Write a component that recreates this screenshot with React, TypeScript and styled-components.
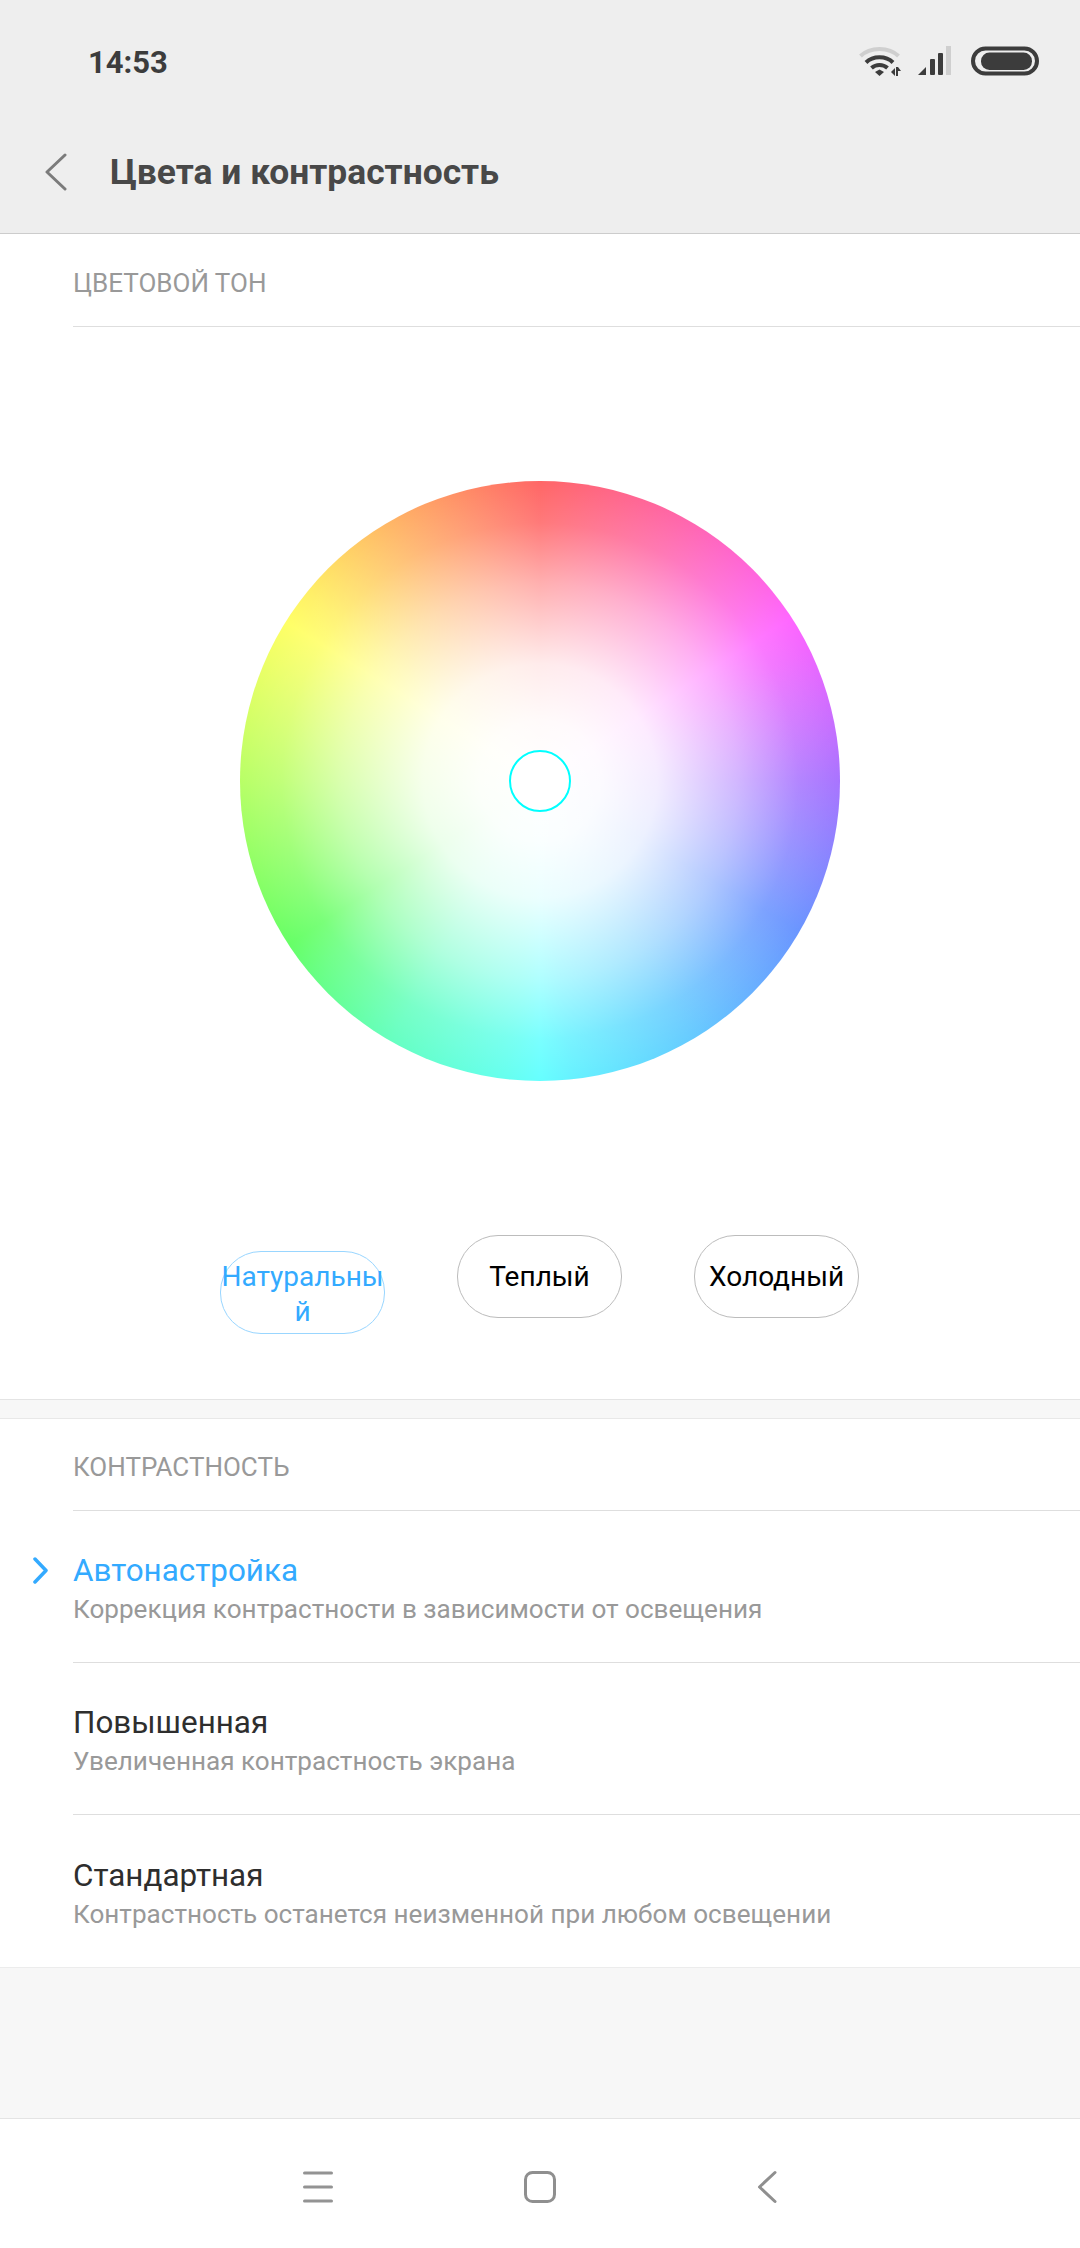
import React from "react"
import styled, { createGlobalStyle } from "styled-components"

const GlobalStyle = createGlobalStyle`
  html, body {
    margin: 0;
    padding: 0;
    background: #fff;
    font-family: Roboto, "Noto Sans", sans-serif;
  }
  * {
    box-sizing: border-box;
  }
`

const Page = styled.div`
  width: 1080px;
  height: 2248px;
  display: flex;
  flex-direction: column;
  background: #f7f7f7;
  overflow: hidden;
`

const Header = styled.header`
  background: #eeeeee;
  border-bottom: 1px solid #cccccc;
  height: 234px;
`

const StatusBar = styled.div`
  height: 124px;
  display: flex;
  align-items: center;
  justify-content: space-between;
  padding: 0 41px 0 88px;
`

const Time = styled.span`
  font-size: 31px;
  font-weight: 700;
  color: #3c3c3c;
`

const StatusIcons = styled.div`
  display: flex;
  align-items: center;
  gap: 17px;
  margin-top: -3px;
`

const ToolBar = styled.div`
  height: 109px;
  display: flex;
  align-items: center;
  padding: 0 0 14px 45px;
`

const Title = styled.h1`
  margin: 0 0 0 43px;
  font-size: 35.4px;
  font-weight: 700;
  color: #484848;
`

const Section = styled.section`
  background: #fff;
`

const SectionTitle = styled.div<{ $tight?: boolean }>`
  margin-left: 73px;
  height: ${(p) => (p.$tight ? "92px" : "93px")};
  display: flex;
  align-items: center;
  padding-top: 5px;
  border-bottom: 1px solid #dedede;
  font-size: 26px;
  color: #999999;
`

const WheelArea = styled.div`
  display: flex;
  flex-direction: column;
  align-items: center;
  padding: 154px 0 65px;
  border-bottom: 1px solid #e4e4e4;
`

const Wheel = styled.div`
  width: 600px;
  height: 600px;
  border-radius: 50%;
  display: flex;
  align-items: center;
  justify-content: center;
  background:
    radial-gradient(
      circle closest-side,
      #fff 0%,
      rgba(255, 255, 255, 0.97) 20%,
      rgba(255, 255, 255, 0.87) 39%,
      rgba(255, 255, 255, 0.48) 66%,
      rgba(255, 255, 255, 0.13) 86%,
      rgba(255, 255, 255, 0) 100%
    ),
    conic-gradient(
      #ff6666 0deg,
      #ff66aa 28deg,
      #ff66e8 50deg,
      #ff66ff 57deg,
      #f066ff 64deg,
      #a874ff 90deg,
      #6a95ff 120deg,
      #66ccff 150deg,
      #66f2ff 174deg,
      #66ffff 180deg,
      #66fff0 186deg,
      #66ffc0 210deg,
      #66ff80 230deg,
      #66ff66 237deg,
      #78ff66 244deg,
      #b8ff66 270deg,
      #f0ff66 295deg,
      #ffff66 302deg,
      #fff066 309deg,
      #ffb066 332deg,
      #ff7a66 352deg,
      #ff6666 360deg
    );
`

const WheelThumb = styled.div`
  width: 62px;
  height: 62px;
  border-radius: 50%;
  border: 2px solid #00ffff;
  background: #ffffff;
`

const Presets = styled.div`
  margin-top: 154px;
  padding-right: 1px;
  display: flex;
  align-items: baseline;
  justify-content: center;
  gap: 72px;
`

const Preset = styled.div<{ $active?: boolean }>`
  width: 165px;
  height: 83px;
  padding-top: ${(p) => (p.$active ? "3px" : "0")};
  border-radius: 41px;
  border: 1px solid ${(p) => (p.$active ? "#99d6ff" : "#bcbcbc")};
  color: ${(p) => (p.$active ? "#33aaff" : "#000000")};
  font-size: 28px;
  line-height: 35px;
  text-align: center;
  overflow-wrap: anywhere;
  display: flex;
  flex-direction: column;
  justify-content: center;
`

const Gap = styled.div`
  height: 19px;
  background: #f7f7f7;
  border-bottom: 1px solid #e8e8e8;
`

const Rows = styled.div`
  border-bottom: 1px solid #ececec;
`

const Row = styled.div<{ $last?: boolean }>`
  position: relative;
  margin-left: 73px;
  height: 152px;
  padding-top: 6px;
  display: flex;
  flex-direction: column;
  justify-content: center;
  border-bottom: ${(p) => (p.$last ? "none" : "1px solid #dedede")};
`

const RowTitle = styled.div<{ $active?: boolean }>`
  font-size: 31.4px;
  line-height: 40px;
  color: ${(p) => (p.$active ? "#33aaff" : "#2e2e2e")};
`

const RowText = styled.div`
  font-size: 26.1px;
  line-height: 37px;
  color: #999999;
`

const Check = styled.svg`
  position: absolute;
  left: -41px;
  top: 46px;
`

const Spacer = styled.div`
  flex: 1;
`

const NavBar = styled.nav`
  height: 130px;
  background: #ffffff;
  border-top: 1px solid #e4e4e4;
  display: flex;
  align-items: center;
  justify-content: center;
  gap: 190px;
  padding-top: 6px;
`

const NavIcon = styled.svg`
  display: block;
`

const wifiIcon = (
  <svg width="42" height="30" viewBox="0 0 42 30">
    <path d="M1.5 10 C11 0.5 30 0.5 39.5 10" fill="none" stroke="#cfcfcf" strokeWidth="4" />
    <path d="M7 16.5 C14 9.5 27 9.5 34 16.5" fill="none" stroke="#3c3c3c" strokeWidth="4" />
    <path d="M12.5 22 C17 18 24 18 28.5 22" fill="none" stroke="#3c3c3c" strokeWidth="4" />
    <path d="M16 26 L20.5 23.5 L25 26 L20.5 30 Z" fill="#3c3c3c" />
    <path d="M32 26 L36 22 V30 Z M37 21 H39 V30 H37 Z M39 21 L42 25 H39 Z" fill="#3c3c3c" />
  </svg>
)

const signalIcon = (
  <svg width="33" height="30" viewBox="0 0 33 30">
    <path d="M0 29 L8 21 V29 Z" fill="#3c3c3c" />
    <rect x="12" y="13" width="5" height="16" rx="1" fill="#3c3c3c" />
    <rect x="20" y="7" width="5" height="22" rx="1" fill="#3c3c3c" />
    <rect x="28" y="0" width="5" height="29" fill="#cfcfcf" />
  </svg>
)

const batteryIcon = (
  <svg width="71" height="30" viewBox="0 0 71 30">
    <rect x="5" y="2.5" width="64" height="25" rx="12.5" fill="none" stroke="#3c3c3c" strokeWidth="4" />
    <rect x="13" y="6.5" width="51" height="17.5" rx="8.5" fill="#3c3c3c" />
  </svg>
)

export default function App() {
  return (
    <Page>
      <GlobalStyle />
      <Header>
        <StatusBar>
          <Time>14:53</Time>
          <StatusIcons>
            {wifiIcon}
            {signalIcon}
            {batteryIcon}
          </StatusIcons>
        </StatusBar>
        <ToolBar>
          <svg width="22" height="38" viewBox="0 0 22 38">
            <path d="M20 2 L2 19 L20 36" fill="none" stroke="#7b7b7b" strokeWidth="3" strokeLinecap="round" strokeLinejoin="round" />
          </svg>
          <Title>Цвета и контрастность</Title>
        </ToolBar>
      </Header>

      <Section>
        <SectionTitle>ЦВЕТОВОЙ ТОН</SectionTitle>
        <WheelArea>
          <Wheel>
            <WheelThumb />
          </Wheel>
          <Presets>
            <Preset $active>Натуральный</Preset>
            <Preset>Теплый</Preset>
            <Preset>Холодный</Preset>
          </Presets>
        </WheelArea>
      </Section>

      <Gap />

      <Section>
        <SectionTitle $tight>КОНТРАСТНОСТЬ</SectionTitle>
        <Rows>
          <Row>
            <Check width="18" height="27" viewBox="0 0 18 27">
              <path d="M3 2 L14 13.5 L3 25" fill="none" stroke="#33aaff" strokeWidth="3.5" strokeLinecap="round" strokeLinejoin="round" />
            </Check>
            <RowTitle $active>Автонастройка</RowTitle>
            <RowText>Коррекция контрастности в зависимости от освещения</RowText>
          </Row>
          <Row>
            <RowTitle>Повышенная</RowTitle>
            <RowText>Увеличенная контрастность экрана</RowText>
          </Row>
          <Row $last>
            <RowTitle>Стандартная</RowTitle>
            <RowText>Контрастность останется неизменной при любом освещении</RowText>
          </Row>
        </Rows>
      </Section>

      <Spacer />

      <NavBar>
        <NavIcon width="32" height="32" viewBox="0 0 32 32">
          <path d="M2.5 2 H29.5 M2.5 16 H29.5 M2.5 30 H29.5" fill="none" stroke="#939393" strokeWidth="3" strokeLinecap="round" />
        </NavIcon>
        <NavIcon width="32" height="34" viewBox="0 0 32 34">
          <rect x="1.5" y="2.5" width="29" height="29" rx="7" fill="none" stroke="#8f8f8f" strokeWidth="3" />
        </NavIcon>
        <NavIcon width="32" height="34" viewBox="0 0 32 34">
          <path d="M29 2.5 L13.5 17 L29 31.5" fill="none" stroke="#8f8f8f" strokeWidth="3" strokeLinecap="round" strokeLinejoin="round" />
        </NavIcon>
      </NavBar>
    </Page>
  )
}
